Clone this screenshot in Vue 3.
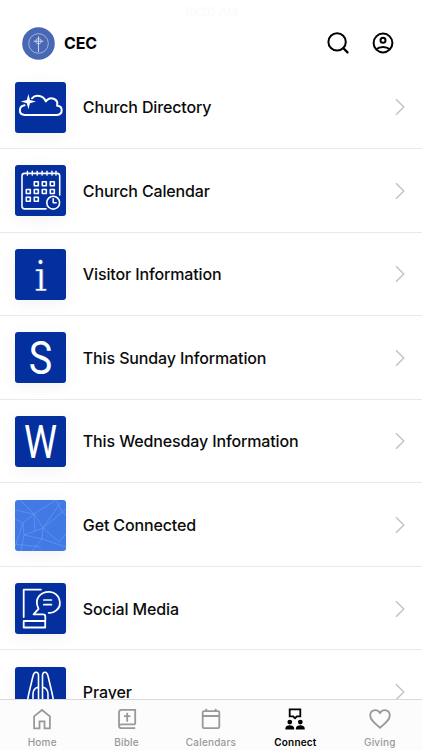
<script setup>
const rows = [
  { title: 'Church Directory', icon: 'cloud' },
  { title: 'Church Calendar', icon: 'calendar' },
  { title: 'Visitor Information', icon: 'info' },
  { title: 'This Sunday Information', icon: 'sunday' },
  { title: 'This Wednesday Information', icon: 'wednesday' },
  { title: 'Get Connected', icon: 'mesh' },
  { title: 'Social Media', icon: 'social' },
  { title: 'Prayer', icon: 'prayer' },
]
const days = [
  [21.3, 18.7], [29.3, 18.7], [37.3, 18.7],
  [13.3, 26.5], [21.3, 26.5], [29.3, 26.5], [37.3, 26.5],
  [13.3, 34.3], [21.3, 34.3],
]
const rings = [12.4, 17.3, 22.2, 27.1, 32, 37, 41]
const tabs = ['Home', 'Bible', 'Calendars', 'Connect', 'Giving']
</script>

<template>
  <div class="screen">
    <header class="header">
      <span class="ghost">10:20 AM</span>
      <svg class="logo" viewBox="0 0 33 33">
        <circle cx="16.5" cy="16.5" r="16.3" fill="#4868b5" />
        <g fill="none" stroke="#dce3f3">
          <circle cx="16.5" cy="16.5" r="9.8" stroke-width=".6" />
          <path d="M16.5 9.3V25M11.6 14.2h9.8" stroke-width=".9" />
          <circle cx="16.5" cy="14.2" r="2.7" stroke-width=".7" />
        </g>
      </svg>
      <h1 class="brand">CEC</h1>
      <svg class="search" viewBox="0 0 24 24">
        <circle cx="11.1" cy="10.9" r="8.7" />
        <path d="M17.4 17.3l4.1 4.1" />
      </svg>
      <svg class="account" viewBox="0 0 24 24">
        <circle cx="12" cy="12" r="9.4" />
        <circle cx="12" cy="9.2" r="2.5" />
        <path d="M5.2 18.3c3.8-3.1 9.8-3.1 13.6 0" />
      </svg>
    </header>

    <main class="list">
      <div v-for="row in rows" :key="row.title" class="row">
        <svg class="tile" :class="{ light: row.icon === 'mesh' }" viewBox="0 0 51 51">
          <template v-if="row.icon === 'cloud'">
            <path class="line" stroke-width="2" d="M9.6 23.2C3.6 24 3 32.6 9.8 32.9H42c6.3-.4 6.2-8.9.1-9.2C43.7 17 35.2 13.3 30.8 19.4 28.5 13.4 20.5 12.2 17 16.3" />
            <path class="solid" d="M13.4 12l1.6 6 6 1.6-6 1.6-1.6 6-1.6-6-6-1.6 6-1.6z" />
          </template>
          <template v-else-if="row.icon === 'calendar'">
            <path class="line" stroke-width="1.6" d="M44.7 30V11q0-2.6-2.6-2.6H9.5q-2.5 0-2.5 2.6v30.3q0 2.6 2.5 2.6H31" />
            <path v-for="x in rings" :key="x" class="line" stroke-width="1.3" :d="`M${x} 6.2v4`" />
            <rect v-for="d in days" :key="d.join()" class="line" stroke-width="1.6" :x="d[0] - 2" :y="d[1] - 2" width="4" height="4" />
            <circle class="line" stroke-width="1.6" cx="38.2" cy="37.7" r="6.4" />
            <path class="line" stroke-width="1.5" d="M38.2 33.8v4h3" />
          </template>
          <text v-else-if="row.icon === 'info'" class="serif" x="25.6" y="42.2">i</text>
          <text v-else-if="row.icon === 'sunday'" class="letter" transform="translate(25.5 41.8) scale(.85 1)">S</text>
          <text v-else-if="row.icon === 'wednesday'" class="letter" transform="translate(25.5 41.8) scale(.8 1)">W</text>
          <path v-else-if="row.icon === 'mesh'" class="mesh" d="M0 10l19 4L41 0M5 0l14 14L8 23 0 47M19 14l9 14L51 9M8 23l1 12 19-7M8 23L0 19M9 35l18 4 24 8M28 28l-1 11-10 12M28 28l16 14 7-8M9 35L6 51M19 14l1 17M28 28l18-26M41 0l6 12 4 3M0 44l26 3" />
          <template v-else-if="row.icon === 'social'">
            <path class="line" stroke-width="1.8" d="M26 6.6H8.7V34M8.7 38h21.5v6.5H8.7zM18.6 31.4l4.9-5.6C18.5 15.5 26 8.5 34.5 8.8c9.5.5 14 12.5 6.8 18.6-2.2 2-4.8 2.8-7.6 2.4M18.6 31.4h9.5q2.2 0 2.2 2.2V38" />
            <path class="line" stroke-width="1.7" d="M28.8 17h7.6M28.8 21.7h7.6" />
          </template>
          <template v-else>
            <path class="line" stroke-width="1.6" d="M12 42c0-7 1-12 2.2-17L18 9c1-5 5.5-5 5.5-.5v34M39 42c0-7-1-12-2.2-17L33 9c-1-5-5.5-5-5.5-.5v34M18 34v-7c0-3 1.5-6 5.5-7M33 34v-7c0-3-1.5-6-5.5-7" />
          </template>
        </svg>
        <span class="title">{{ row.title }}</span>
        <svg class="chevron" viewBox="0 0 10 18"><path d="M1 1.2L8.8 9 1 16.8" /></svg>
      </div>
    </main>

    <nav class="tabs">
      <div v-for="tab in tabs" :key="tab" class="tab" :class="{ active: tab === 'Connect' }">
        <svg viewBox="0 0 24 24">
          <path v-if="tab === 'Home'" d="M4.1 9.4L12 3l7.9 6.4v11.9h-5.4v-7h-5v7H4.1z" />
          <template v-else-if="tab === 'Bible'">
            <path d="M20.2 17.4V2.8H6.5Q4 2.8 4 5.3v13.4q0 2.5 2.5 2.5h13.7M4.3 18.6q.3-1.3 2.2-1.3h13.7" />
            <path d="M12.2 5.8v9M9 9.1h6.4" />
          </template>
          <path v-else-if="tab === 'Calendars'" d="M5 4.2h14q1.3 0 1.3 1.3v14.3q0 1.3-1.3 1.3H5q-1.3 0-1.3-1.3V5.5q0-1.3 1.3-1.3zM3.7 9h16.6M7.3 1.8v2.4M16.7 1.8v2.4" />
          <template v-else-if="tab === 'Connect'">
            <path d="M6.7 2.4h10.6v6.9h-3.4L12 11.2l-1.9-1.9H6.7z" />
            <g class="people">
              <circle cx="6.8" cy="15.1" r="2.4" /><circle cx="17.3" cy="15.1" r="2.4" />
              <path d="M2.4 22.6v-1.3c0-4.2 8.8-4.2 8.8 0v1.3zM12.9 22.6v-1.3c0-4.2 8.8-4.2 8.8 0v1.3z" />
            </g>
          </template>
          <path v-else d="M12 20.8C6.5 16 2.2 12.6 2.2 8.4c0-5.6 6.8-7 9.8-2.4 3-4.6 9.8-3.2 9.8 2.4 0 4.2-4.3 7.6-9.8 12.4z" />
        </svg>
        <span>{{ tab }}</span>
      </div>
    </nav>
  </div>
</template>

<style>
body { margin: 0; background: #fff; }
</style>

<style scoped>
.screen {
  width: 422px;
  height: 750px;
  overflow: hidden;
  display: flex;
  flex-direction: column;
  background: #fff;
  color: #0b0b0b;
  font-family: Inter, "Liberation Sans", sans-serif;
}
.header {
  position: relative;
  flex: none;
  box-sizing: border-box;
  height: 65.5px;
  padding: 20.5px 27px 0 22px;
  display: flex;
  align-items: center;
}
.ghost {
  position: absolute;
  top: 4px;
  left: 0;
  width: 100%;
  text-align: center;
  font-size: 12px;
  color: #fafafa;
}
.logo { width: 33px; height: 33px; }
.brand {
  margin: 0 auto 0 9px;
  font-size: 16px;
  font-weight: 700;
  letter-spacing: -.2px;
  color: #000;
}
.search, .account {
  width: 24px;
  height: 24px;
  fill: none;
  stroke: #000;
  stroke-width: 2;
}
.search { margin-right: 21px; }
.search path { stroke-width: 2.3; stroke-linecap: round; }
.list { flex: 1; min-height: 0; overflow: hidden; }
.row {
  box-sizing: border-box;
  height: 83.55px;
  padding: 1px 17px 0 15.3px;
  display: flex;
  align-items: center;
  border-bottom: 1px solid #e9e9e9;
}
.tile {
  flex: none;
  width: 51px;
  height: 51px;
  border-radius: 3px;
  background: #032f9f;
  box-shadow: 0 3px 16px rgba(0, 0, 0, .06);
}
.light { background: #427ae5; }
.line { fill: none; stroke: #fff; stroke-linecap: round; stroke-linejoin: round; }
.solid { fill: #fff; }
.serif { font: 42px "DejaVu Serif", serif; fill: #fff; stroke: #032f9f; stroke-width: .6; text-anchor: middle; }
.letter { font: 400 46.5px Roboto, sans-serif; fill: #fff; text-anchor: middle; }
.mesh { fill: none; stroke: #77a3f5; stroke-width: .5; }
.title {
  flex: 1;
  margin-left: 16.5px;
  font-size: 16px;
  font-weight: 500;
  line-height: 20px;
  letter-spacing: -.13px;
  white-space: nowrap;
}
.chevron { width: 10px; height: 18px; fill: none; stroke: #c2c2c4; stroke-width: 1.4; }
.tabs {
  flex: none;
  box-sizing: border-box;
  height: 51px;
  display: grid;
  grid-template-columns: repeat(5, 1fr);
  border-top: 1px solid #d9d9d9;
  background: #fcfcfc;
}
.tab {
  display: flex;
  flex-direction: column;
  align-items: center;
  padding-top: 7px;
  gap: 5px;
  color: #999;
  font-size: 10px;
  font-weight: 500;
  line-height: 12px;
  letter-spacing: .2px;
}
.tab svg { width: 24px; height: 24px; fill: none; stroke: currentColor; stroke-width: 1.8; }
.active { color: #000; font-weight: 600; }
.people { fill: currentColor; stroke: none; }
</style>
